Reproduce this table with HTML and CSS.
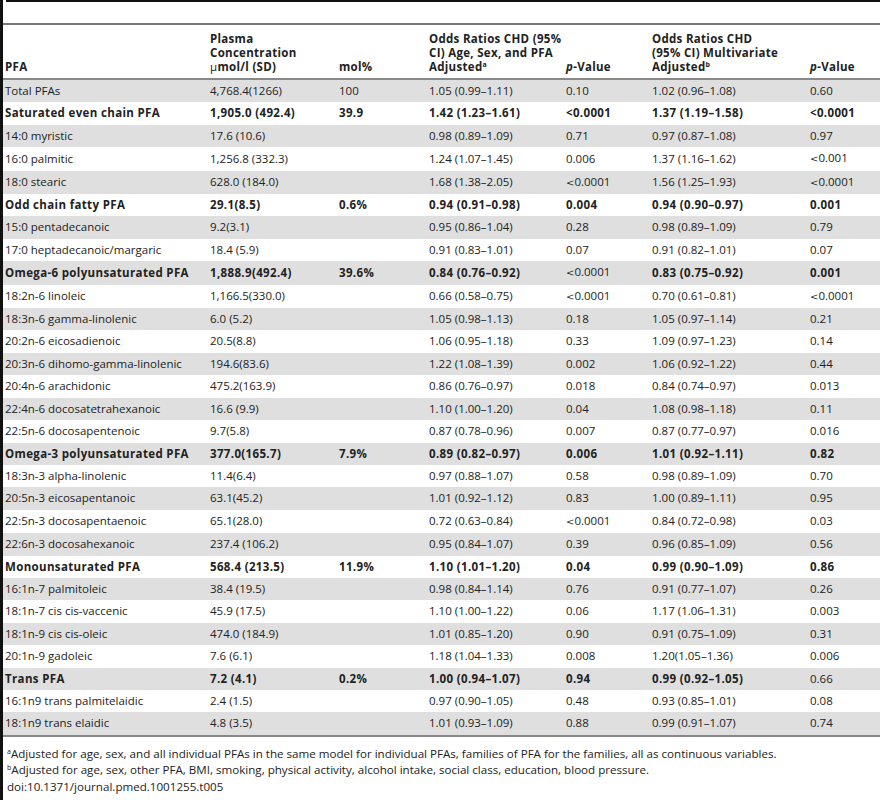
FILE: index.html
```html
<!DOCTYPE html>
<html lang="en">
<head>
    <meta charset="UTF-8">
    <title>Table 5 - Plasma fatty acids and CHD</title>
    <link rel="stylesheet" href="styles.css">
</head>
<body>

    <div class="sheet">
        <div class="caption-space"></div>

        <table class="data-table">
            <colgroup>
                <col class="c-name">
                <col class="c-conc">
                <col class="c-mol">
                <col class="c-odds">
                <col class="c-p">
                <col class="c-odds2">
                <col class="c-p2">
            </colgroup>
            <thead>
                <tr>
                    <th>PFA</th>
                    <th>Plasma<br>Concentration<br><span class="mu">&micro;</span>mol/l (SD)</th>
                    <th>mol%</th>
                    <th>Odds Ratios CHD (95%<br>CI) Age, Sex, and PFA<br>Adjusted<sup>a</sup></th>
                    <th><i>p</i>-Value</th>
                    <th>Odds Ratios CHD<br>(95% CI) Multivariate<br>Adjusted<sup>b</sup></th>
                    <th><i>p</i>-Value</th>
                </tr>
            </thead>
            <tbody>
                <tr><td>Total PFAs</td><td>4,768.4(1266)</td><td>100</td><td>1.05 (0.99–1.11)</td><td>0.10</td><td>1.02 (0.96–1.08)</td><td>0.60</td></tr>
                <tr class="group"><td>Saturated even chain PFA</td><td>1,905.0 (492.4)</td><td>39.9</td><td>1.42 (1.23–1.61)</td><td>&lt;0.0001</td><td>1.37 (1.19–1.58)</td><td>&lt;0.0001</td></tr>
                <tr><td>14:0 myristic</td><td>17.6 (10.6)</td><td></td><td>0.98 (0.89–1.09)</td><td>0.71</td><td>0.97 (0.87–1.08)</td><td>0.97</td></tr>
                <tr><td>16:0 palmitic</td><td>1,256.8 (332.3)</td><td></td><td>1.24 (1.07–1.45)</td><td>0.006</td><td>1.37 (1.16–1.62)</td><td><span class="lt">&lt;</span>0.001</td></tr>
                <tr><td>18:0 stearic</td><td>628.0 (184.0)</td><td></td><td>1.68 (1.38–2.05)</td><td><span class="lt">&lt;</span>0.0001</td><td>1.56 (1.25–1.93)</td><td><span class="lt">&lt;</span>0.0001</td></tr>
                <tr class="group"><td>Odd chain fatty PFA</td><td>29.1(8.5)</td><td>0.6%</td><td>0.94 (0.91–0.98)</td><td>0.004</td><td>0.94 (0.90–0.97)</td><td>0.001</td></tr>
                <tr><td>15:0 pentadecanoic</td><td>9.2(3.1)</td><td></td><td>0.95 (0.86–1.04)</td><td>0.28</td><td>0.98 (0.89–1.09)</td><td>0.79</td></tr>
                <tr><td>17:0 heptadecanoic/margaric</td><td>18.4 (5.9)</td><td></td><td>0.91 (0.83–1.01)</td><td>0.07</td><td>0.91 (0.82–1.01)</td><td>0.07</td></tr>
                <tr class="group"><td>Omega-6 polyunsaturated PFA</td><td>1,888.9(492.4)</td><td>39.6%</td><td>0.84 (0.76–0.92)</td><td class="plain"><span class="lt">&lt;</span>0.0001</td><td>0.83 (0.75–0.92)</td><td>0.001</td></tr>
                <tr><td>18:2n-6 linoleic</td><td>1,166.5(330.0)</td><td></td><td>0.66 (0.58–0.75)</td><td><span class="lt">&lt;</span>0.0001</td><td>0.70 (0.61–0.81)</td><td><span class="lt">&lt;</span>0.0001</td></tr>
                <tr><td>18:3n-6 gamma-linolenic</td><td>6.0 (5.2)</td><td></td><td>1.05 (0.98–1.13)</td><td>0.18</td><td>1.05 (0.97–1.14)</td><td>0.21</td></tr>
                <tr><td>20:2n-6 eicosadienoic</td><td>20.5(8.8)</td><td></td><td>1.06 (0.95–1.18)</td><td>0.33</td><td>1.09 (0.97–1.23)</td><td>0.14</td></tr>
                <tr><td>20:3n-6 dihomo-gamma-linolenic</td><td>194.6(83.6)</td><td></td><td>1.22 (1.08–1.39)</td><td>0.002</td><td>1.06 (0.92–1.22)</td><td>0.44</td></tr>
                <tr><td>20:4n-6 arachidonic</td><td>475.2(163.9)</td><td></td><td>0.86 (0.76–0.97)</td><td>0.018</td><td>0.84 (0.74–0.97)</td><td>0.013</td></tr>
                <tr><td>22:4n-6 docosatetrahexanoic</td><td>16.6 (9.9)</td><td></td><td>1.10 (1.00–1.20)</td><td>0.04</td><td>1.08 (0.98–1.18)</td><td>0.11</td></tr>
                <tr><td>22:5n-6 docosapentenoic</td><td>9.7(5.8)</td><td></td><td>0.87 (0.78–0.96)</td><td>0.007</td><td>0.87 (0.77–0.97)</td><td>0.016</td></tr>
                <tr class="group"><td>Omega-3 polyunsaturated PFA</td><td>377.0(165.7)</td><td>7.9%</td><td>0.89 (0.82–0.97)</td><td>0.006</td><td>1.01 (0.92–1.11)</td><td>0.82</td></tr>
                <tr><td>18:3n-3 alpha-linolenic</td><td>11.4(6.4)</td><td></td><td>0.97 (0.88–1.07)</td><td>0.58</td><td>0.98 (0.89–1.09)</td><td>0.70</td></tr>
                <tr><td>20:5n-3 eicosapentanoic</td><td>63.1(45.2)</td><td></td><td>1.01 (0.92–1.12)</td><td>0.83</td><td>1.00 (0.89–1.11)</td><td>0.95</td></tr>
                <tr><td>22:5n-3 docosapentaenoic</td><td>65.1(28.0)</td><td></td><td>0.72 (0.63–0.84)</td><td><span class="lt">&lt;</span>0.0001</td><td>0.84 (0.72–0.98)</td><td>0.03</td></tr>
                <tr><td>22:6n-3 docosahexanoic</td><td>237.4 (106.2)</td><td></td><td>0.95 (0.84–1.07)</td><td>0.39</td><td>0.96 (0.85–1.09)</td><td>0.56</td></tr>
                <tr class="group"><td>Monounsaturated PFA</td><td>568.4 (213.5)</td><td>11.9%</td><td>1.10 (1.01–1.20)</td><td>0.04</td><td>0.99 (0.90–1.09)</td><td>0.86</td></tr>
                <tr><td>16:1n-7 palmitoleic</td><td>38.4 (19.5)</td><td></td><td>0.98 (0.84–1.14)</td><td>0.76</td><td>0.91 (0.77–1.07)</td><td>0.26</td></tr>
                <tr><td>18:1n-7 cis cis-vaccenic</td><td>45.9 (17.5)</td><td></td><td>1.10 (1.00–1.22)</td><td>0.06</td><td>1.17 (1.06–1.31)</td><td>0.003</td></tr>
                <tr><td>18:1n-9 cis cis-oleic</td><td>474.0 (184.9)</td><td></td><td>1.01 (0.85–1.20)</td><td>0.90</td><td>0.91 (0.75–1.09)</td><td>0.31</td></tr>
                <tr><td>20:1n-9 gadoleic</td><td>7.6 (6.1)</td><td></td><td>1.18 (1.04–1.33)</td><td>0.008</td><td>1.20(1.05–1.36)</td><td>0.006</td></tr>
                <tr class="group"><td>Trans PFA</td><td>7.2 (4.1)</td><td>0.2%</td><td>1.00 (0.94–1.07)</td><td>0.94</td><td>0.99 (0.92–1.05)</td><td class="plain">0.66</td></tr>
                <tr><td>16:1n9 trans palmitelaidic</td><td>2.4 (1.5)</td><td></td><td>0.97 (0.90–1.05)</td><td>0.48</td><td>0.93 (0.85–1.01)</td><td>0.08</td></tr>
                <tr><td>18:1n9 trans elaidic</td><td>4.8 (3.5)</td><td></td><td>1.01 (0.93–1.09)</td><td>0.88</td><td>0.99 (0.91–1.07)</td><td>0.74</td></tr>
            </tbody>
        </table>

        <!-- Footnotes -->
        <div class="notes">
            <p><sup>a</sup>Adjusted for age, sex, and all individual PFAs in the same model for individual PFAs, families of PFA for the families, all as continuous variables.</p>
            <p><sup>b</sup>Adjusted for age, sex, other PFA, BMI, smoking, physical activity, alcohol intake, social class, education, blood pressure.</p>
            <p>doi:10.1371/journal.pmed.1001255.t005</p>
        </div>
    </div>

</body>
</html>
```

FILE: styles.css
```css
body {
    font-family: "Open Sans", Arial, sans-serif;
    margin: 0;
    padding: 0;
    background-color: #fff;
    color: #222;
}

.sheet {
    width: 877px;
    height: 800px;
    border-left: 3px solid #111;
    overflow: hidden;
}

.caption-space {
    height: 21px;
    margin-left: 3px;
    border-top: 2px solid #111;
}

/* Table */
.data-table {
    width: 100%;
    table-layout: fixed;
    border-collapse: collapse;
    font-size: 11.5px;
    line-height: 14.4px;
    border-top: 2px solid #777;
    border-bottom: 2px solid #888;
}

.c-name { width: 205px; }
.c-conc { width: 129px; }
.c-mol { width: 90px; }
.c-odds { width: 137px; }
.c-p { width: 86px; }
.c-odds2 { width: 158px; }
.c-p2 { width: 72px; }

.data-table th {
    text-align: left;
    vertical-align: bottom;
    font-weight: bold;
    letter-spacing: 0.3px;
    padding: 7px 2px 4px 2px;
    line-height: 14px;
    border-bottom: 2px solid #888;
    white-space: nowrap;
}

.data-table th sup,
.notes sup {
    font-size: 7px;
    line-height: 0;
    vertical-align: 4px;
}

.data-table td {
    padding: 4px 2px;
    white-space: nowrap;
}

.data-table tbody tr:nth-child(odd) {
    background-color: #dfdfdf;
}

.data-table tr.group td {
    font-weight: bold;
    letter-spacing: 0.35px;
}

.data-table tr.group td.plain {
    font-weight: normal;
    letter-spacing: 0;
}

.lt {
    font-family: "DejaVu Serif", serif;
    font-weight: normal;
    font-size: 10px;
}

.mu {
    font-weight: normal;
}

/* Footnotes */
.notes {
    padding: 9px 4px 0;
    font-size: 11.6px;
}

.notes p {
    margin: 0;
    line-height: 16.5px;
}
```
